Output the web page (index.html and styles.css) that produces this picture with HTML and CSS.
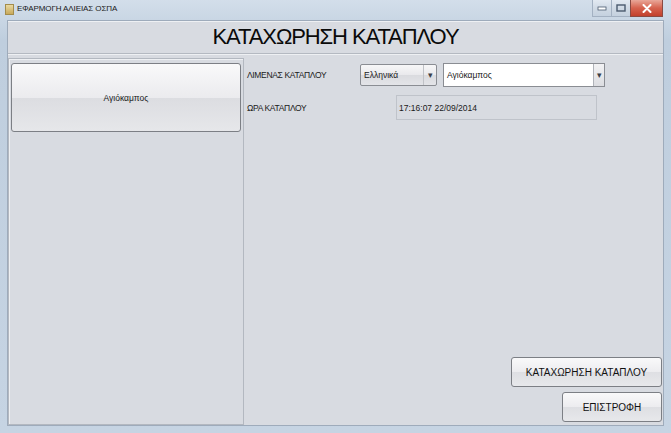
FILE: index.html
```html
<!DOCTYPE html>
<html lang="el">
<head>
    <meta charset="UTF-8">
    <meta name="viewport" content="width=device-width, initial-scale=1.0">
    <title>ΕΦΑΡΜΟΓΗ ΑΛΙΕΙΑΣ ΟΣΠΑ</title>
    <link rel="stylesheet" href="styles.css">
</head>
<body>
    <div class="window">
        <div class="titlebar">
            <span class="app-icon"></span>
            <span class="title">ΕΦΑΡΜΟΓΗ ΑΛΙΕΙΑΣ ΟΣΠΑ</span>
            <div class="controls">
                <span class="ctl">
                    <svg width="10" height="5" viewBox="0 0 10 5"><rect x="1" y="1" width="8" height="3" fill="#fff" stroke="#4a5a6e" stroke-width="0.8"/></svg>
                </span>
                <span class="ctl">
                    <svg width="10" height="8" viewBox="0 0 10 8"><rect x="1" y="1" width="8" height="6" fill="none" stroke="#4a5a6e" stroke-width="1.4"/></svg>
                </span>
                <span class="ctl close">
                    <svg width="10" height="9" viewBox="0 0 10 9"><path d="M1.5 1 L8.5 8 M8.5 1 L1.5 8" stroke="#fff" stroke-width="2" stroke-linecap="round"/></svg>
                </span>
            </div>
        </div>

        <div class="frame">
            <div class="client">
                <div class="heading">ΚΑΤΑΧΩΡΗΣΗ ΚΑΤΑΠΛΟΥ</div>

                <div class="main">
                    <div class="side">
                        <button class="port-button">Αγιόκαμπος</button>
                    </div>

                    <div class="form">
                        <div class="row">
                            <span class="label port-label">ΛΙΜΕΝΑΣ ΚΑΤΑΠΛΟΥ</span>
                            <div class="combo lang-combo">
                                <span class="combo-text">Ελληνικά</span>
                                <span class="combo-arrow">▾</span>
                            </div>
                            <div class="combo port-combo">
                                <span class="combo-text">Αγιόκαμπος</span>
                                <span class="combo-arrow">▾</span>
                            </div>
                        </div>

                        <div class="row">
                            <span class="label time-label">ΩΡΑ ΚΑΤΑΠΛΟΥ</span>
                            <div class="time-field">17:16:07 22/09/2014</div>
                        </div>

                        <div class="actions">
                            <button class="action-button save-button">ΚΑΤΑΧΩΡΗΣΗ ΚΑΤΑΠΛΟΥ</button>
                            <button class="action-button back-button">ΕΠΙΣΤΡΟΦΗ</button>
                        </div>
                    </div>
                </div>
            </div>
        </div>
    </div>
</body>
</html>
```

FILE: styles.css
```css
body {
    margin: 0;
    font-family: "Liberation Sans", Arial, sans-serif;
    background: #c3d1e1;
}

.window {
    width: 671px;
    height: 433px;
    display: flex;
    flex-direction: column;
    background: linear-gradient(to bottom, #d3deea, #bfcede 40px, #c6d4e3);
}

/* title bar */
.titlebar {
    height: 20px;
    display: flex;
    align-items: flex-start;
    flex-shrink: 0;
}

.app-icon {
    width: 9px;
    height: 11px;
    margin: 4px 3px 0 5px;
    background: linear-gradient(to bottom, #e9d9a2, #c8a95a);
    border: 1px solid #a38c4c;
    box-sizing: border-box;
}

.title {
    font-size: 8px;
    color: #1a1a1a;
    margin-top: 4px;
    letter-spacing: -0.1px;
}

.controls {
    margin-left: auto;
    margin-right: 8px;
    display: flex;
}

.ctl {
    width: 19px;
    height: 17px;
    display: flex;
    align-items: center;
    justify-content: center;
    border: 1px solid #a3b1c2;
    border-top: none;
    border-right: none;
    background: linear-gradient(to bottom, #e2e9f1, #d0dae5 50%, #c4d1df);
    box-sizing: border-box;
}

.ctl.close {
    width: 33px;
    border-right: 1px solid #8a4a42;
    border-color: #8a4a42;
    background: linear-gradient(to bottom, #e9a799, #d6624e 50%, #c2402c);
}

/* client area */
.frame {
    flex: 1;
    display: flex;
    padding: 0 7px 7px 7px;
}

.client {
    flex: 1;
    display: flex;
    flex-direction: column;
    background: #d8dbe1;
    border: 1px solid #9eabbb;
}

.heading {
    height: 33px;
    flex-shrink: 0;
    display: flex;
    align-items: center;
    justify-content: center;
    padding-bottom: 1px;
    box-sizing: border-box;
    font-size: 22px;
    letter-spacing: -1.1px;
    color: #0a0a0a;
    border-top: 1px solid #eef0f3;
    border-bottom: 1px solid #b4b9c1;
    box-shadow: 0 1px 0 #eef0f3;
}

.main {
    flex: 1;
    display: flex;
    padding-top: 3px;
}

.side {
    width: 236px;
    box-sizing: border-box;
    margin-top: 1px;
    padding: 4px 1px;
    border: 1px solid #b3b8c0;
    box-shadow: inset 1px 1px 0 #eef0f3;
}

.port-button {
    width: 230px;
    height: 69px;
    margin-left: 1px;
    border: 1px solid #7c7f85;
    border-radius: 3px;
    background: linear-gradient(to bottom, #f9f9fa, #ebebee 50%, #dcdde1 51%, #e6e7ea);
    font-family: inherit;
    font-size: 8.5px;
    color: #1a1a1a;
    padding: 0;
}

/* form */
.form {
    flex: 1;
    display: flex;
    flex-direction: column;
    padding: 5px 1px 3px 3px;
}

.row {
    display: flex;
    align-items: center;
    height: 25px;
}

.row + .row {
    margin-top: 8px;
}

.label {
    font-size: 8.5px;
    letter-spacing: -0.35px;
    color: #1a1a1a;
}

.port-label {
    width: 113px;
}

.time-label {
    width: 149px;
}

.combo {
    display: flex;
    align-items: center;
    box-sizing: border-box;
    font-size: 8.5px;
    color: #1a1a1a;
}

.lang-combo {
    width: 77px;
    height: 22px;
    border: 1px solid #8a8d93;
    border-radius: 2px;
    background: linear-gradient(to bottom, #f7f7f8, #e9e9ec 50%, #dadbdf 51%, #e3e4e8);
}

.port-combo {
    width: 162px;
    height: 24px;
    margin-left: 6px;
    border: 1px solid #8a8d93;
    background: #fff;
}

.combo-text {
    flex: 1;
    padding-left: 3px;
}

.combo-arrow {
    width: 10px;
    height: 100%;
    display: flex;
    align-items: center;
    justify-content: center;
    font-size: 9px;
    color: #3a3f48;
    border-left: 1px solid #b0b3b9;
    background: linear-gradient(to bottom, #f2f2f4, #dcdde1);
}

.lang-combo .combo-arrow {
    width: 12px;
    border-left-color: #c0c2c7;
    background: none;
}

.time-field {
    width: 201px;
    height: 25px;
    box-sizing: border-box;
    display: flex;
    align-items: center;
    padding-left: 2px;
    font-size: 8.5px;
    color: #1a1a1a;
    border: 1px solid #bfc3ca;
    background: #d8dbe1;
}

.actions {
    margin-top: auto;
    display: flex;
    flex-direction: column;
    align-items: flex-end;
    gap: 5px;
}

.action-button {
    height: 30px;
    border: 1px solid #7c7f85;
    border-radius: 3px;
    background: linear-gradient(to bottom, #f9f9fa, #ececef 50%, #dedfe3 51%, #e7e8eb);
    font-family: inherit;
    font-size: 10px;
    color: #111;
    padding: 0;
}

.save-button {
    width: 151px;
}

.back-button {
    width: 100px;
}
```
